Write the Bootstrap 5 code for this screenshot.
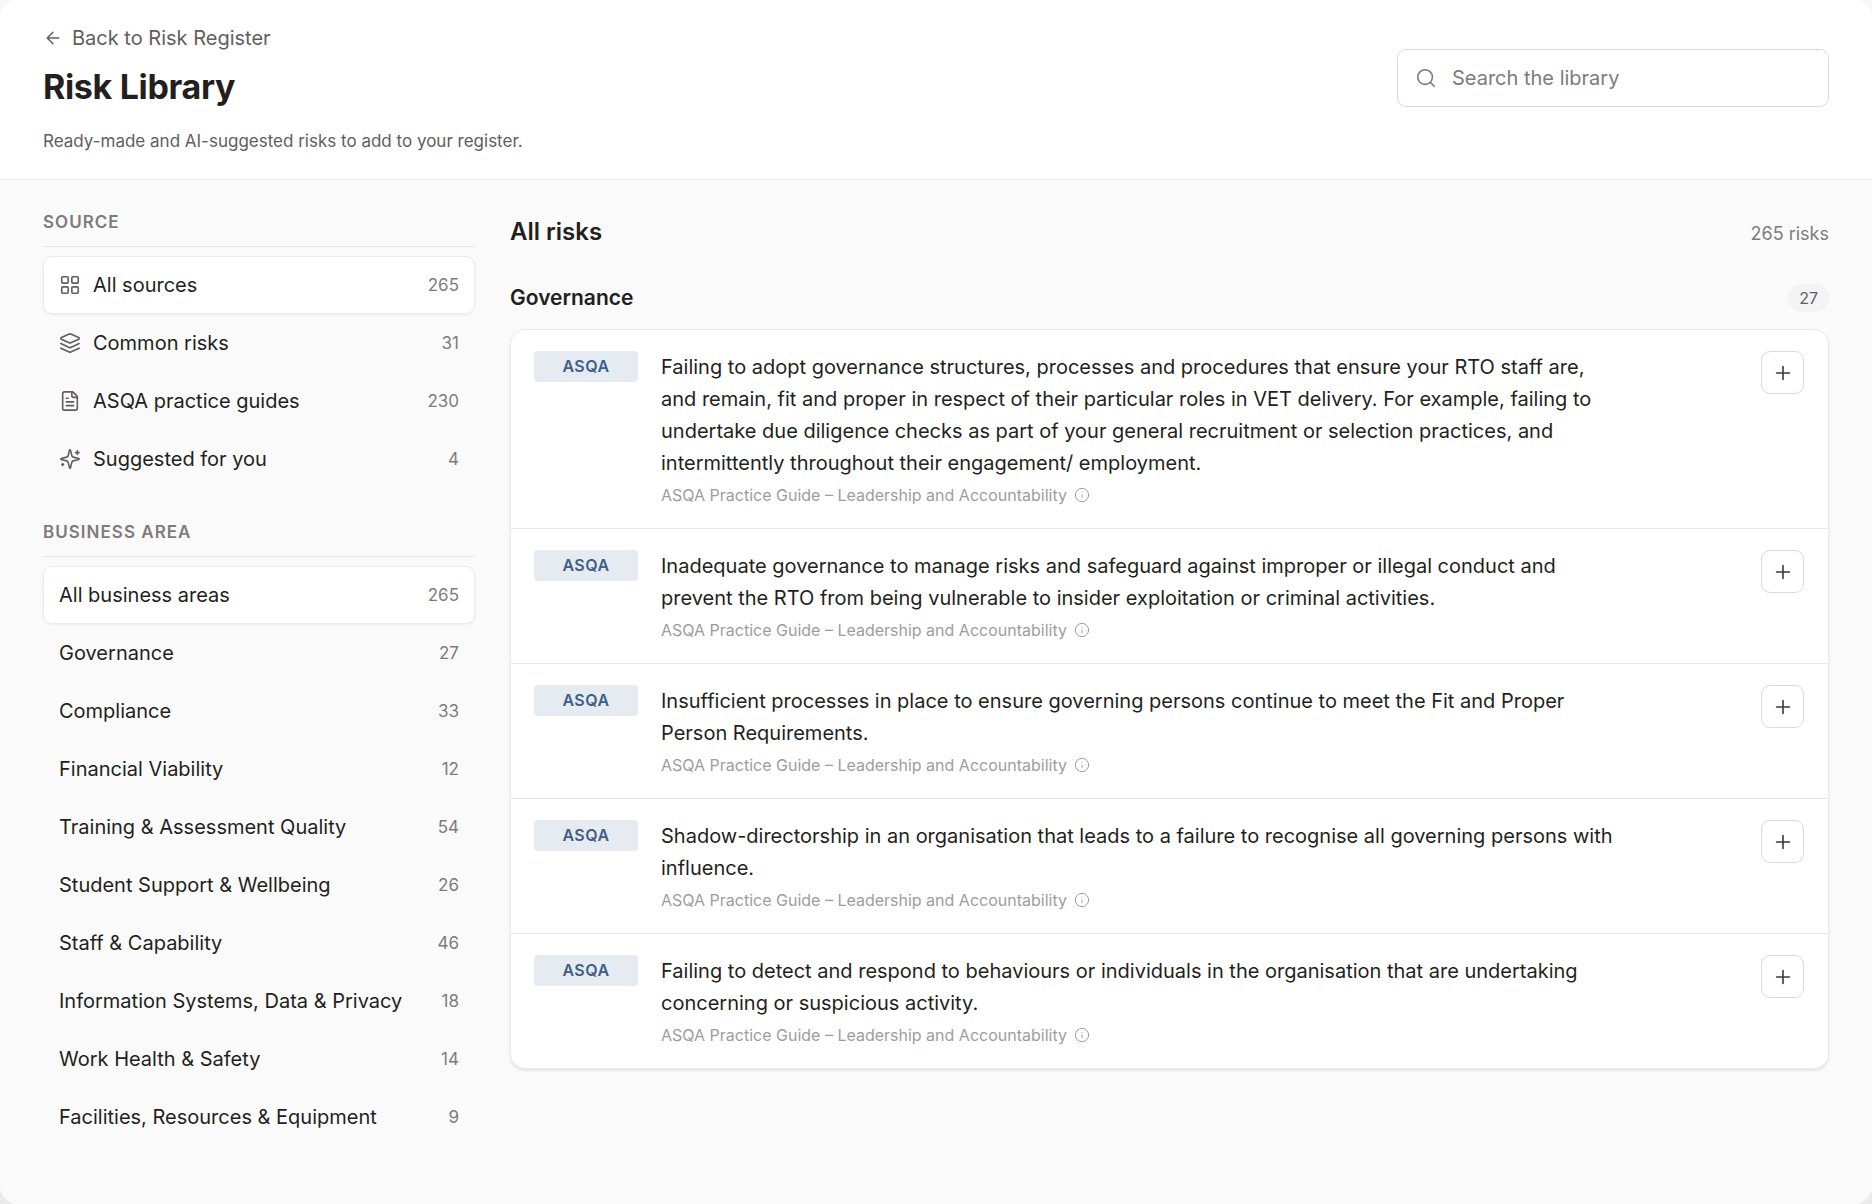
<!DOCTYPE html>
<html lang="en">
<head>
<meta charset="utf-8">
<meta name="viewport" content="width=device-width, initial-scale=1">
<title>Risk Library</title>
<link rel="stylesheet" href="https://cdn.jsdelivr.net/npm/bootstrap@5.3.0/dist/css/bootstrap.min.css">
<style>
  :root { --ink: #231f20; --ink-2: #625d5e; --ink-3: #7f7a7b; --ink-4: #a09c9d; --line: #ebebeb; --edge: #d9d9d9; }
  html { background: linear-gradient(#f8f8f8, #ebebeb); }
  body { font-family: Inter, "Liberation Sans", sans-serif; font-size: 20px; line-height: 32px; color: var(--ink); background: transparent; }
  .app-shell { background: #fafafa; border-radius: 18px; }
  .ico { width: 22px; height: 22px; flex: none; fill: none; stroke: currentColor; stroke-width: 1.75; stroke-linecap: round; stroke-linejoin: round; }
  .ico-md { width: 20px; height: 20px; }
  .ico-sm { width: 16px; height: 16px; stroke-width: 1.5; }

  .page-head { padding: 22px 43px 26px; border-bottom: 1px solid #e6e6e6; }
  .back-link { gap: 9px; color: var(--ink-2); }
  .page-title { font-size: 34px; line-height: 40px; font-weight: 700; margin: 10px 0 22px; letter-spacing: -0.01em; }
  .page-sub { font-size: 17px; line-height: 24px; color: var(--ink-2); }
  .search-box { width: 432px; margin-top: 27px; padding: 0 17px; gap: 15px; background: #fff; border: 1px solid var(--edge); border-radius: 9px; color: var(--ink-3); }
  .search-box .form-control { height: 56px; font-size: 20px; color: var(--ink); background: transparent; }
  .search-box .form-control::placeholder { color: var(--ink-3); opacity: 1; }
  .search-box:focus-within { border-color: #8aa2c0; }

  .page-body { padding: 26px 43px 56px; gap: 35px; }
  .filters { width: 432px; flex: none; }
  .filter-title { font-size: 17px; line-height: 32px; font-weight: 600; letter-spacing: 0.06em; color: var(--ink-3); padding-bottom: 8px; margin-bottom: 9px; border-bottom: 1px solid #e6e6e6; }
  .filter-title.second { margin-top: 28px; }
  .filter-item { height: 58px; padding: 0 15px; gap: 12px; color: var(--ink); border: 1px solid transparent; border-radius: 9px; background: transparent; text-align: left; }
  .filter-item .ico { color: var(--ink-2); }
  .filter-item.active { background: #fff; border-color: var(--line); box-shadow: 0 1px 3px rgba(0, 0, 0, .06); }
  .filter-count { font-size: 17px; color: var(--ink-3); }

  .list-head { padding-top: 6px; margin-bottom: 30px; }
  .list-title { font-size: 24px; line-height: 40px; font-weight: 600; }
  .list-total { font-size: 18px; color: var(--ink-3); }
  .group-title { font-size: 21px; line-height: 32px; font-weight: 600; }
  .group-count { font-size: 16px; line-height: 28px; padding: 0 11px; font-weight: 400; color: var(--ink-2); background: #f3f3f3; }
  .risk-card { margin-top: 15px; border: 1px solid var(--line); border-radius: 15px; background: #fff; box-shadow: 0 2px 3px rgba(0, 0, 0, .09); }
  .risk-row { padding: 21px 24px 21px 23px; gap: 23px; }
  .risk-row + .risk-row { border-top: 1px solid #e6e6e6; }
  .source-tag { width: 104px; flex: none; font-size: 16px; line-height: 31px; font-weight: 600; letter-spacing: 0.03em; color: #3f5f87; background: #e6ebf2; border-radius: 4px; }
  .risk-text { max-width: 958px; }
  .risk-source { font-size: 16px; line-height: 24px; margin-top: 4px; gap: 7px; color: var(--ink-4); }
  .add-btn { width: 43px; height: 43px; color: #3c3839; background: #fff; border: 1px solid var(--edge); border-radius: 9px; }
  .add-btn:hover, .filter-item:not(.active):hover { background: #f3f3f3; }
</style>
</head>
<body>
<div class="app-shell min-vh-100 overflow-hidden">
  <header class="page-head bg-white d-flex justify-content-between align-items-start">
    <div>
      <a class="back-link d-inline-flex align-items-center text-decoration-none" href="#">
        <svg class="ico ico-md" viewBox="0 0 24 24" aria-hidden="true"><path d="m12 19-7-7 7-7M19 12H5"/></svg>
        Back to Risk Register
      </a>
      <h1 class="page-title">Risk Library</h1>
      <p class="page-sub mb-0">Ready-made and AI-suggested risks to add to your register.</p>
    </div>
    <label class="search-box d-flex align-items-center">
      <svg class="ico" viewBox="0 0 24 24" aria-hidden="true"><circle cx="11" cy="11" r="8"/><path d="m21 21-4.3-4.3"/></svg>
      <input class="form-control border-0 shadow-none p-0" type="search" placeholder="Search the library" aria-label="Search the library">
    </label>
  </header>

  <div class="page-body d-flex align-items-start">
    <aside class="filters">
      <h2 class="filter-title">SOURCE</h2>
      <div class="d-flex flex-column">
        <button type="button" class="filter-item active d-flex align-items-center">
          <svg class="ico" viewBox="0 0 24 24" aria-hidden="true"><rect x="3" y="3" width="7" height="7" rx="1"/><rect x="14" y="3" width="7" height="7" rx="1"/><rect x="14" y="14" width="7" height="7" rx="1"/><rect x="3" y="14" width="7" height="7" rx="1"/></svg>
          <span>All sources</span><span class="filter-count ms-auto">265</span>
        </button>
        <button type="button" class="filter-item d-flex align-items-center">
          <svg class="ico" viewBox="0 0 24 24" aria-hidden="true"><path d="m12.83 2.18a2 2 0 0 0-1.66 0L2.6 6.08a1 1 0 0 0 0 1.83l8.58 3.91a2 2 0 0 0 1.66 0l8.58-3.9a1 1 0 0 0 0-1.83Z"/><path d="m22 17.65-9.17 4.16a2 2 0 0 1-1.66 0L2 17.65"/><path d="m22 12.65-9.17 4.16a2 2 0 0 1-1.66 0L2 12.65"/></svg>
          <span>Common risks</span><span class="filter-count ms-auto">31</span>
        </button>
        <button type="button" class="filter-item d-flex align-items-center">
          <svg class="ico" viewBox="0 0 24 24" aria-hidden="true"><path d="M15 2H6a2 2 0 0 0-2 2v16a2 2 0 0 0 2 2h12a2 2 0 0 0 2-2V7Z"/><path d="M14 2v4a2 2 0 0 0 2 2h4M10 9H8M16 13H8M16 17H8"/></svg>
          <span>ASQA practice guides</span><span class="filter-count ms-auto">230</span>
        </button>
        <button type="button" class="filter-item d-flex align-items-center">
          <svg class="ico" viewBox="0 0 24 24" aria-hidden="true"><path d="M9.937 15.5A2 2 0 0 0 8.5 14.063l-6.135-1.582a.5.5 0 0 1 0-.962L8.5 9.936A2 2 0 0 0 9.937 8.5l1.582-6.135a.5.5 0 0 1 .963 0L14.063 8.5A2 2 0 0 0 15.5 9.937l6.135 1.581a.5.5 0 0 1 0 .964L15.5 14.063a2 2 0 0 0-1.437 1.437l-1.582 6.135a.5.5 0 0 1-.963 0z"/><path d="M20 3v4M22 5h-4M4 17v2M5 18H3"/></svg>
          <span>Suggested for you</span><span class="filter-count ms-auto">4</span>
        </button>
      </div>

      <h2 class="filter-title second">BUSINESS AREA</h2>
      <div class="d-flex flex-column">
        <button type="button" class="filter-item active d-flex align-items-center"><span>All business areas</span><span class="filter-count ms-auto">265</span></button>
        <button type="button" class="filter-item d-flex align-items-center"><span>Governance</span><span class="filter-count ms-auto">27</span></button>
        <button type="button" class="filter-item d-flex align-items-center"><span>Compliance</span><span class="filter-count ms-auto">33</span></button>
        <button type="button" class="filter-item d-flex align-items-center"><span>Financial Viability</span><span class="filter-count ms-auto">12</span></button>
        <button type="button" class="filter-item d-flex align-items-center"><span>Training &amp; Assessment Quality</span><span class="filter-count ms-auto">54</span></button>
        <button type="button" class="filter-item d-flex align-items-center"><span>Student Support &amp; Wellbeing</span><span class="filter-count ms-auto">26</span></button>
        <button type="button" class="filter-item d-flex align-items-center"><span>Staff &amp; Capability</span><span class="filter-count ms-auto">46</span></button>
        <button type="button" class="filter-item d-flex align-items-center"><span>Information Systems, Data &amp; Privacy</span><span class="filter-count ms-auto">18</span></button>
        <button type="button" class="filter-item d-flex align-items-center"><span>Work Health &amp; Safety</span><span class="filter-count ms-auto">14</span></button>
        <button type="button" class="filter-item d-flex align-items-center"><span>Facilities, Resources &amp; Equipment</span><span class="filter-count ms-auto">9</span></button>
      </div>
    </aside>

    <main class="flex-grow-1">
      <div class="list-head d-flex justify-content-between align-items-baseline">
        <h2 class="list-title mb-0">All risks</h2>
        <span class="list-total">265 risks</span>
      </div>
      <section>
        <div class="d-flex justify-content-between align-items-center">
          <h3 class="group-title mb-0">Governance</h3>
          <span class="group-count rounded-pill">27</span>
        </div>
        <div class="risk-card">
          <article class="risk-row d-flex align-items-start">
            <span class="source-tag text-center">ASQA</span>
            <div class="flex-grow-1">
              <p class="risk-text mb-0">Failing to adopt governance structures, processes and procedures that ensure your RTO staff are, and remain, fit and proper in respect of their particular roles in VET delivery. For example, failing to undertake due diligence checks as part of your general recruitment or selection practices, and intermittently throughout their engagement/ employment.</p>
              <div class="risk-source d-flex align-items-center">ASQA Practice Guide – Leadership and Accountability <svg class="ico ico-sm" viewBox="0 0 24 24" aria-hidden="true"><circle cx="12" cy="12" r="10"/><path d="M12 16v-4M12 8h.01"/></svg></div>
            </div>
            <button type="button" class="add-btn d-flex align-items-center justify-content-center flex-shrink-0 p-0" aria-label="Add risk"><svg class="ico" viewBox="0 0 24 24" aria-hidden="true"><path d="M5 12h14M12 5v14"/></svg></button>
          </article>
          <article class="risk-row d-flex align-items-start">
            <span class="source-tag text-center">ASQA</span>
            <div class="flex-grow-1">
              <p class="risk-text mb-0">Inadequate governance to manage risks and safeguard against improper or illegal conduct and prevent the RTO from being vulnerable to insider exploitation or criminal activities.</p>
              <div class="risk-source d-flex align-items-center">ASQA Practice Guide – Leadership and Accountability <svg class="ico ico-sm" viewBox="0 0 24 24" aria-hidden="true"><circle cx="12" cy="12" r="10"/><path d="M12 16v-4M12 8h.01"/></svg></div>
            </div>
            <button type="button" class="add-btn d-flex align-items-center justify-content-center flex-shrink-0 p-0" aria-label="Add risk"><svg class="ico" viewBox="0 0 24 24" aria-hidden="true"><path d="M5 12h14M12 5v14"/></svg></button>
          </article>
          <article class="risk-row d-flex align-items-start">
            <span class="source-tag text-center">ASQA</span>
            <div class="flex-grow-1">
              <p class="risk-text mb-0">Insufficient processes in place to ensure governing persons continue to meet the Fit and Proper Person Requirements.</p>
              <div class="risk-source d-flex align-items-center">ASQA Practice Guide – Leadership and Accountability <svg class="ico ico-sm" viewBox="0 0 24 24" aria-hidden="true"><circle cx="12" cy="12" r="10"/><path d="M12 16v-4M12 8h.01"/></svg></div>
            </div>
            <button type="button" class="add-btn d-flex align-items-center justify-content-center flex-shrink-0 p-0" aria-label="Add risk"><svg class="ico" viewBox="0 0 24 24" aria-hidden="true"><path d="M5 12h14M12 5v14"/></svg></button>
          </article>
          <article class="risk-row d-flex align-items-start">
            <span class="source-tag text-center">ASQA</span>
            <div class="flex-grow-1">
              <p class="risk-text mb-0">Shadow-directorship in an organisation that leads to a failure to recognise all governing persons with influence.</p>
              <div class="risk-source d-flex align-items-center">ASQA Practice Guide – Leadership and Accountability <svg class="ico ico-sm" viewBox="0 0 24 24" aria-hidden="true"><circle cx="12" cy="12" r="10"/><path d="M12 16v-4M12 8h.01"/></svg></div>
            </div>
            <button type="button" class="add-btn d-flex align-items-center justify-content-center flex-shrink-0 p-0" aria-label="Add risk"><svg class="ico" viewBox="0 0 24 24" aria-hidden="true"><path d="M5 12h14M12 5v14"/></svg></button>
          </article>
          <article class="risk-row d-flex align-items-start">
            <span class="source-tag text-center">ASQA</span>
            <div class="flex-grow-1">
              <p class="risk-text mb-0">Failing to detect and respond to behaviours or individuals in the organisation that are undertaking concerning or suspicious activity.</p>
              <div class="risk-source d-flex align-items-center">ASQA Practice Guide – Leadership and Accountability <svg class="ico ico-sm" viewBox="0 0 24 24" aria-hidden="true"><circle cx="12" cy="12" r="10"/><path d="M12 16v-4M12 8h.01"/></svg></div>
            </div>
            <button type="button" class="add-btn d-flex align-items-center justify-content-center flex-shrink-0 p-0" aria-label="Add risk"><svg class="ico" viewBox="0 0 24 24" aria-hidden="true"><path d="M5 12h14M12 5v14"/></svg></button>
          </article>
        </div>
      </section>
    </main>
  </div>
</div>
<script src="https://cdn.jsdelivr.net/npm/bootstrap@5.3.0/dist/js/bootstrap.bundle.min.js"></script>
</body>
</html>
